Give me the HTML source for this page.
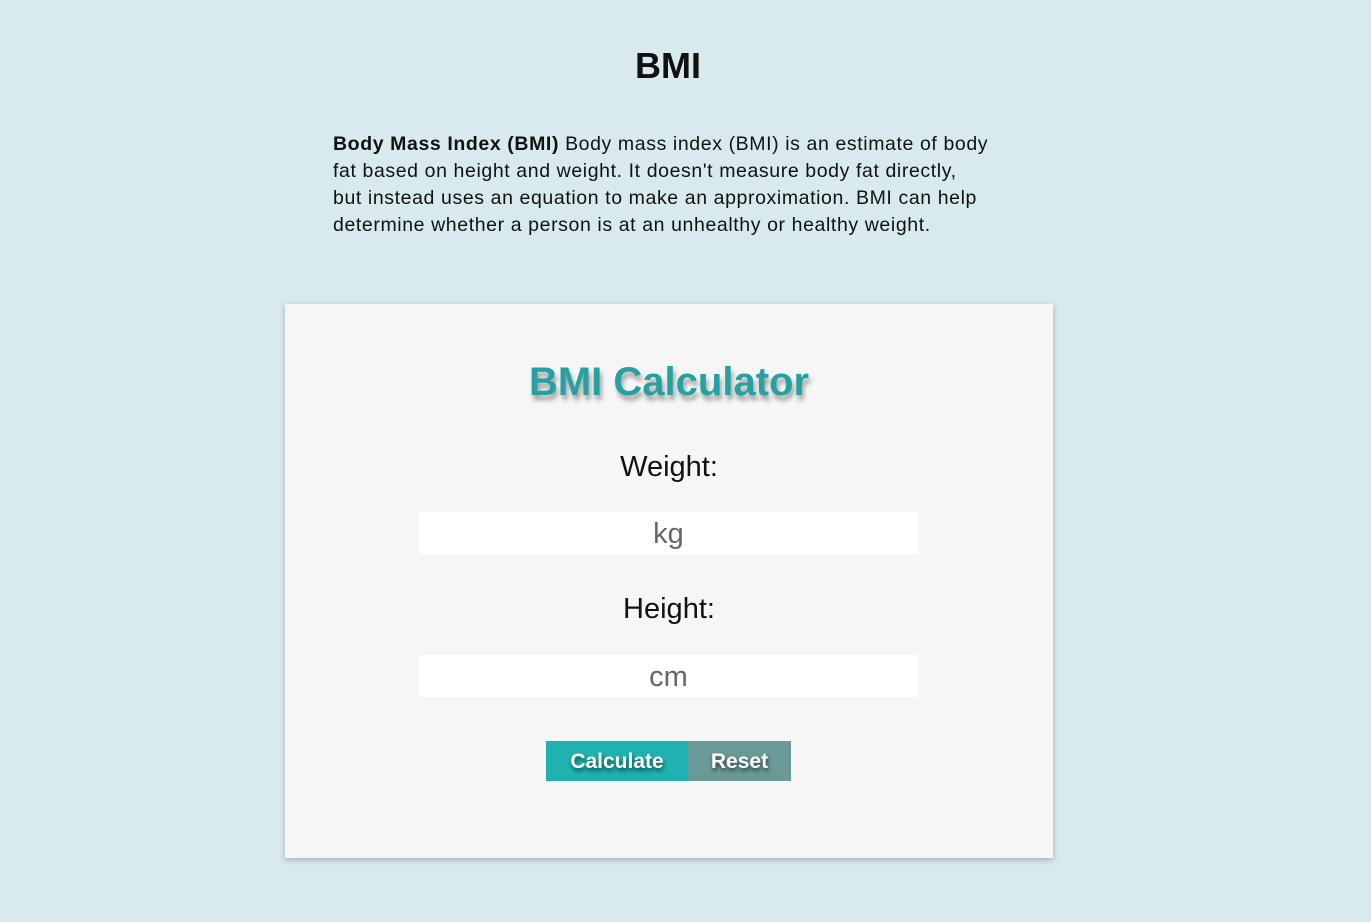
<!DOCTYPE html>
<html><head><meta charset="utf-8"><style>
html,body{margin:0;padding:0;}
body{width:1371px;height:922px;background:#d8eaee;font-family:"Liberation Sans",sans-serif;position:relative;overflow:hidden;color:#111;}
h1{position:absolute;top:44px;left:0;width:1336px;text-align:center;margin:0;font-size:36px;font-weight:bold;line-height:44px;}
.p{position:absolute;left:333px;top:131px;width:720px;font-size:19.5px;line-height:27px;white-space:nowrap;letter-spacing:0.6px;}
.card{position:absolute;left:285px;top:304px;width:768px;height:554px;background:#f6f6f6;box-shadow:0 2px 6px rgba(0,0,0,0.25);}
.t{position:absolute;top:357px;left:285px;width:768px;text-align:center;font-size:40px;font-weight:bold;color:#26a0a0;text-shadow:2px 5px 5px rgba(0,0,0,0.35);line-height:50px;}
.l{position:absolute;left:285px;width:768px;text-align:center;font-size:29px;line-height:36px;}
.in{position:absolute;left:419px;width:499px;height:42px;background:#fff;text-align:center;font-size:29px;color:#666;line-height:44px;}
.b{position:absolute;top:741px;height:40px;color:#fff;font-weight:bold;font-size:21px;line-height:42px;text-align:center;text-shadow:1px 3px 4px rgba(0,0,0,0.6);}
</style></head><body>
<h1>BMI</h1>
<div class="p"><b>Body Mass Index (BMI)</b> Body mass index (BMI) is an estimate of body<br>fat based on height and weight. It doesn't measure body fat directly,<br>but instead uses an equation to make an approximation. BMI can help<br>determine whether a person is at an unhealthy or healthy weight.</div>
<div class="card"></div>
<div class="t">BMI Calculator</div>
<div class="l" style="top:449px">Weight:</div>
<div class="in" style="top:512px">kg</div>
<div class="l" style="top:591px">Height:</div>
<div class="in" style="top:655px">cm</div>
<div class="b" style="left:546px;width:142px;background:#20b2b0">Calculate</div>
<div class="b" style="left:688px;width:103px;background:#6a9a98">Reset</div>
</body></html>
